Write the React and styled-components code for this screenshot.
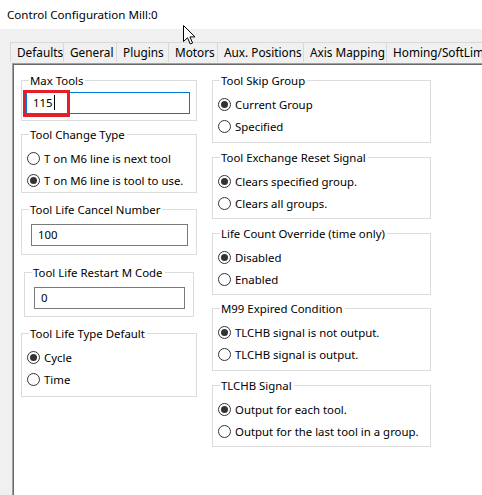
import React from "react";
import styled, { createGlobalStyle } from "styled-components";

const GlobalStyle = createGlobalStyle`
  body {
    margin: 0;
    background: #ffffff;
  }
`;

const font = `"Noto Sans", "Open Sans", sans-serif`;

const tabs = [
  { label: "Defaults", width: 54 },
  { label: "General", width: 53 },
  { label: "Plugins", width: 52 },
  { label: "Motors", width: 49 },
  { label: "Aux. Positions", width: 86 },
  { label: "Axis Mapping", width: 83 },
  { label: "Homing/SoftLimits", width: 120 },
];

const leftGroups = [
  { title: "Max Tools", gap: 0, height: 41, input: { value: "115", top: 3, left: 4, width: 164, focused: true } },
  { title: "Tool Change Type", gap: 13, height: 59, radios: ["T on M6 line is next tool", "T on M6 line is tool to use."], checked: 1 },
  { title: "Tool Life Cancel Number", gap: 16, height: 46, input: { value: "100", top: 6, left: 9, width: 157 } },
  { title: "Tool Life Restart M Code", gap: 17, height: 45, inset: 3, input: { value: "0", top: 6, left: 9, width: 151 } },
  { title: "Tool Life Type Default", gap: 16, height: 64, radios: ["Cycle", "Time"], checked: 0 },
];

const rightGroups = [
  { title: "Tool Skip Group", gap: 0, height: 63, radios: ["Current Group", "Specified"], checked: 0 },
  { title: "Tool Exchange Reset Signal", gap: 14, height: 62, radios: ["Clears specified group.", "Clears all groups."], checked: 0 },
  { title: "Life Count Override (time only)", gap: 14, height: 62, radios: ["Disabled", "Enabled"], checked: 0 },
  { title: "M99 Expired Condition", gap: 13, height: 63, radios: ["TLCHB signal is not output.", "TLCHB signal is output."], checked: 0 },
  { title: "TLCHB Signal", gap: 14, height: 62, radios: ["Output for each tool.", "Output for the last tool in a group."], checked: 0 },
];

const GroupBox = ({ group }) => (
  <Group $gap={group.gap} $height={group.height} $inset={group.inset || 0}>
    <Legend>{group.title}</Legend>
    {group.input && (
      <InputWrap $top={group.input.top} $left={group.input.left} $width={group.input.width}>
        <TextBox $focused={group.input.focused}>
          {group.input.value}
          {group.input.focused && <Caret />}
        </TextBox>
        {group.input.focused && <Highlight />}
      </InputWrap>
    )}
    {group.radios && (
      <RadioList>
        {group.radios.map((label, idx) => (
          <RadioRow key={idx}>
            <RadioCircle $checked={idx === group.checked} />
            <span>{label}</span>
          </RadioRow>
        ))}
      </RadioList>
    )}
  </Group>
);

const App = () => {
  return (
    <>
      <GlobalStyle />
      <Window>
        <TitleBar>Control Configuration Mill:0</TitleBar>
        <Cursor width="14" height="20" viewBox="0 0 14 20">
          <path
            d="M0.5 0.5 L0.5 16.5 L4.5 12.8 L7.3 19 L9.6 18 L6.9 11.9 L12 11.9 Z"
            fill="#ffffff"
            stroke="#000000"
            strokeWidth="1"
            strokeLinejoin="miter"
          />
        </Cursor>
        <Body>
          <TabStrip>
            {tabs.map((tab, idx) => (
              <Tab key={tab.label} $width={tab.width} $first={idx === 0}>
                {tab.label}
              </Tab>
            ))}
          </TabStrip>
          <Panel>
            <Column $width={176}>
              {leftGroups.map((g) => (
                <GroupBox key={g.title} group={g} />
              ))}
            </Column>
            <Column $width={219}>
              {rightGroups.map((g) => (
                <GroupBox key={g.title} group={g} />
              ))}
            </Column>
          </Panel>
        </Body>
      </Window>
    </>
  );
};

const Window = styled.div`
  position: relative;
  width: 482px;
  height: 495px;
  overflow: hidden;
  display: flex;
  flex-direction: column;
  font-family: ${font};
  font-size: 11.4px;
  color: #000000;
  background: #f0f0f0;
`;

const TitleBar = styled.div`
  height: 29px;
  flex: 0 0 29px;
  background: #ffffff;
  display: flex;
  align-items: center;
  padding-left: 7px;
  padding-bottom: 1px;
  box-sizing: border-box;
  font-size: 11.6px;
`;

const Cursor = styled.svg`
  position: absolute;
  left: 183px;
  top: 25px;
`;

const Body = styled.div`
  flex: 1;
  display: flex;
  flex-direction: column;
  padding-top: 13px;
  padding-left: 12px;
`;

const TabStrip = styled.div`
  display: flex;
  height: 20px;
  margin-left: -2px;
`;

const Tab = styled.div`
  flex: 0 0 ${(p) => p.$width}px;
  box-sizing: border-box;
  height: 20px;
  border: 1px solid #d9d9d9;
  border-bottom: none;
  border-left-width: ${(p) => (p.$first ? 1 : 0)}px;
  background: #f0f0f0;
  display: flex;
  align-items: center;
  padding: 0 0 1px 6px;
  font-size: 11.8px;
  white-space: nowrap;
  overflow: hidden;
`;

const Panel = styled.div`
  flex: 1;
  display: flex;
  align-items: flex-start;
  gap: 15px;
  background: #ffffff;
  border-top: 1px solid #a0a0a0;
  border-left: 1px solid #a0a0a0;
  box-shadow: inset 1px 1px 0 #696969;
  margin-top: 1px;
  padding: 16px 0 0 8px;
`;

const Column = styled.div`
  flex: 0 0 ${(p) => p.$width}px;
  display: flex;
  flex-direction: column;
`;

const Group = styled.div`
  box-sizing: border-box;
  height: ${(p) => p.$height}px;
  margin-top: ${(p) => p.$gap}px;
  margin-left: ${(p) => p.$inset}px;
  margin-right: ${(p) => p.$inset}px;
  border: 1px solid #dcdcdc;
  background: #ffffff;
`;

const Legend = styled.span`
  display: block;
  width: fit-content;
  height: 16px;
  line-height: 16px;
  margin: -8px 0 0 7px;
  padding: 0 2px 0 1px;
  background: #ffffff;
  white-space: nowrap;
`;

const InputWrap = styled.div`
  position: relative;
  width: ${(p) => p.$width}px;
  margin: ${(p) => p.$top}px 0 0 ${(p) => p.$left}px;
`;

const TextBox = styled.div`
  box-sizing: border-box;
  height: 22px;
  border: 1px solid ${(p) => (p.$focused ? "#0078d7" : "#7a7a7a")};
  display: flex;
  align-items: center;
  padding: 0 0 1px 6px;
  background: #ffffff;
`;

const Caret = styled.span`
  display: inline-block;
  width: 1px;
  height: 15px;
  background: #000000;
  margin-left: 1px;
`;

const Highlight = styled.div`
  position: absolute;
  left: -3px;
  top: -2px;
  width: 47px;
  height: 27px;
  box-sizing: border-box;
  border: 3px solid #e3202a;
`;

const RadioList = styled.div`
  margin-top: 4px;
  padding-left: 5px;
  display: flex;
  flex-direction: column;
`;

const RadioRow = styled.div`
  height: 22px;
  display: flex;
  align-items: center;
  gap: 4px;
  white-space: nowrap;
`;

const RadioCircle = styled.span`
  box-sizing: border-box;
  flex: 0 0 13px;
  width: 13px;
  height: 13px;
  border-radius: 50%;
  border: 1px solid #333333;
  background: #ffffff;
  display: flex;
  align-items: center;
  justify-content: center;

  &::after {
    content: "";
    display: ${(p) => (p.$checked ? "block" : "none")};
    width: 7px;
    height: 7px;
    border-radius: 50%;
    background: #333333;
  }
`;

export default App;
